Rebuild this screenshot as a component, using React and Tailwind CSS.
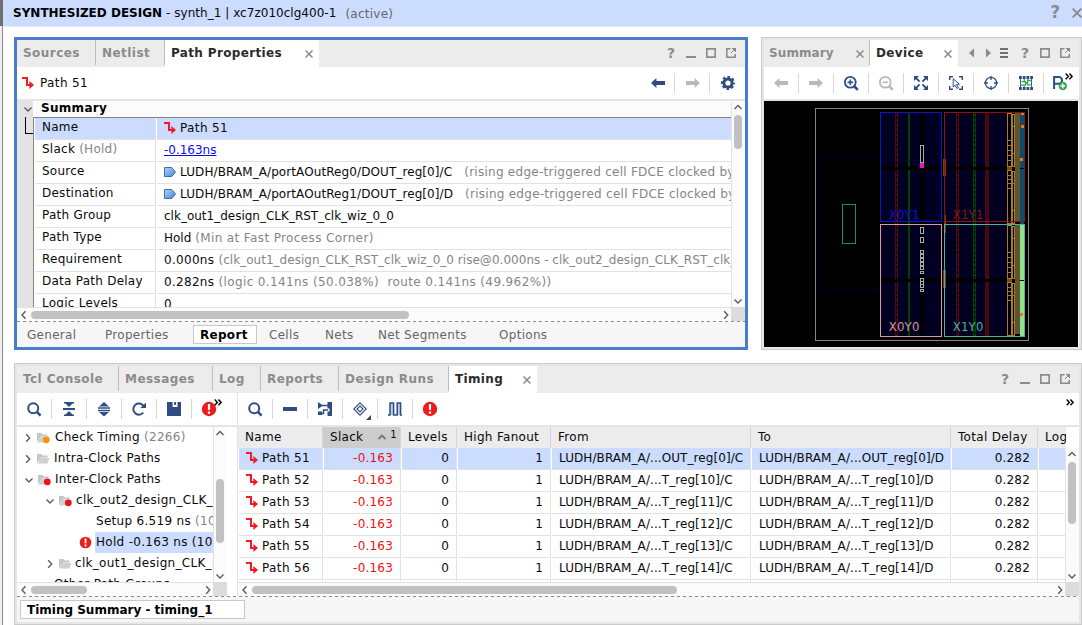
import React from "react";

const NAVY = "#2f4d82";
const DIM = "#b9b9b9";

function Svg({ w = 16, h = 16, children, className = "" }) {
  return (
    <svg width={w} height={h} viewBox={`0 0 ${w} ${h}`} className={"block shrink-0 " + className} fill="none">
      {children}
    </svg>
  );
}

/* ---------- glyphs ---------- */
const PathIcon = () => (
  <Svg w={12} h={12}>
    <path d="M0 1h5v7h3" stroke="#ee1c24" strokeWidth="2" />
    <path d="M7.4 4v8L12 8z" fill="#ee1c24" />
  </Svg>
);
const CellIcon = () => (
  <Svg w={12} h={12}>
    <defs>
      <linearGradient id="pin" x1="0" y1="0" x2="1" y2="1">
        <stop offset="0" stopColor="#b5d6f8" />
        <stop offset="1" stopColor="#3f83d8" />
      </linearGradient>
    </defs>
    <path d="M.5 1.5h7.3l3.7 4.5-3.7 4.5H.5z" fill="url(#pin)" stroke="#3c6fb4" />
  </Svg>
);
const BackArrow = ({ c = NAVY }) => (
  <Svg>
    <path d="M1 8l5.4-5v3H15v4H6.4v3z" fill={c} />
  </Svg>
);
const FwdArrow = ({ c = DIM }) => (
  <Svg>
    <path d="M15 8L9.6 3v3H1v4h8.6v3z" fill={c} />
  </Svg>
);
const Gear = () => (
  <Svg>
    <circle cx="8" cy="8" r="4.1" stroke={NAVY} strokeWidth="3" />
    <circle cx="8" cy="8" r="6.1" stroke={NAVY} strokeWidth="2" strokeDasharray="2.6 2.19" strokeDashoffset="1.3" />
  </Svg>
);
const Search = () => (
  <Svg>
    <circle cx="7.2" cy="7.2" r="5" stroke={NAVY} strokeWidth="2" />
    <path d="M10.8 10.8l3.8 3.8" stroke={NAVY} strokeWidth="2.6" />
  </Svg>
);
const Zoom = ({ c = NAVY, plus }) => (
  <Svg>
    <circle cx="7.3" cy="7.3" r="5.4" stroke={c} strokeWidth="1.8" />
    <path d="M11 11l3.8 3.8" stroke={c} strokeWidth="2.6" />
    <path d="M4.5 7.3h5.6" stroke={c} strokeWidth="1.6" />
    {plus && <path d="M7.3 4.5v5.6" stroke={c} strokeWidth="1.6" />}
  </Svg>
);
const FitIcon = () => (
  <Svg>
    <path d="M1 1h5L1 6zM15 1v5l-5-5zM1 15v-5l5 5zM15 15h-5l5-5z" fill={NAVY} />
    <path d="M3 3l3.6 3.6M13 3L9.4 6.6M3 13l3.6-3.6M13 13L9.4 9.4" stroke={NAVY} strokeWidth="1.8" />
  </Svg>
);
const SelectArea = () => (
  <Svg>
    <path d="M1.7 5V1.7H5M11 1.7h3.3V5M14.3 11v3.3H11M5 14.3H1.7V11" stroke={NAVY} strokeWidth="1.4" />
    <path d="M5.2 3.8l6.2 5.4-2.9.2 1.9 3.3-1.5.8-1.7-3.3-2 1.8z" stroke={NAVY} fill="#fff" />
  </Svg>
);
const Target = () => (
  <Svg>
    <circle cx="8" cy="8" r="5.6" stroke={NAVY} strokeWidth="1.3" />
    <path d="M8 1v4M8 11v4M1 8h4M11 8h4" stroke={NAVY} strokeWidth="1.3" />
  </Svg>
);
const Routing = () => (
  <Svg>
    <path d="M2.5 4v9M13.500 4v9M6.200 4v2M10 4v1M6.200 11v2" stroke={NAVY} strokeWidth=".9" />
    <path d="M1 2.500h14M1 13.500h14" stroke={NAVY} strokeWidth="3" strokeDasharray="2.800 .93" />
    <path d="M3.500 6.600h4v3.600H2.500M12.800 5.500H9.600v4.300h3.200M7.500 8h2" stroke="#2fa84b" strokeWidth="1.3" />
  </Svg>
);
const PinPlus = () => (
  <Svg>
    <path d="M2.1 14V1.9h4.6a3.4 3.4 0 010 6.8H2.1" stroke={NAVY} strokeWidth="2" />
    <circle cx="10.8" cy="11" r="4.2" fill="#35a84d" />
    <path d="M10.8 8.6v4.8M8.4 11h4.8" stroke="#fff" strokeWidth="1.4" />
  </Svg>
);
const Collapse = () => (
  <Svg>
    <path d="M2 7h12v2H2zM3 1h10v1.4H3zM4.4 2.4h7.2L8 6zM3 15h10v-1.4H3zM4.4 13.6h7.2L8 10z" fill={NAVY} />
  </Svg>
);
const Expand = () => (
  <Svg>
    <path d="M8 1l5 4.600H3zM2 6.200h12v1.500H2zM2 8.800h12v1.500H2zM8 15.400l5-4.300H3z" fill={NAVY} />
  </Svg>
);
const Reload = () => (
  <Svg>
    <path d="M12.3 11.5A5.6 5.6 0 1112.6 5" stroke={NAVY} strokeWidth="2" />
    <path d="M15 1.4V7H9.4z" fill={NAVY} />
  </Svg>
);
const Save = () => (
  <Svg>
    <path d="M1 1h3.500v5h7V1H15v14H1z" fill={NAVY} />
    <path d="M8.2 1h1.800v3H8.200zM4 1h2.600v5H4z" fill={NAVY} />
  </Svg>
);
const Alert = ({ s = 16 }) => (
  <svg width={s} height={s} viewBox="0 0 16 16" className="block shrink-0">
    <circle cx="8" cy="8" r="7.2" fill="#ed1c1c" />
    <path d="M6.9 3h2.2v6H6.9zM6.9 10.6h2.2v2.2H6.9z" fill="#fff" />
  </svg>
);
const Minus = () => (
  <Svg>
    <path d="M1 6h14v4H1z" fill={NAVY} />
  </Svg>
);
const Schematic = () => (
  <Svg>
    <path d="M1 1l5 3.500L1 8z" fill={NAVY} />
    <path d="M5 4.500h6M3 12.500h3.500V9H11" stroke={NAVY} strokeWidth="1.5" />
    <path d="M10.500 1H15v14h-4.500v-4.500H12.500V7.500h-2zM1 10.500h4V14H1z" fill={NAVY} />
  </Svg>
);
const Diamond = () => (
  <Svg w={22} h={22}>
    <path d="M11 4.8l6.2 6.2-6.2 6.2L4.8 11z" stroke={NAVY} strokeWidth="1.1" />
    <path d="M11 8l3 3-3 3-3-3z" stroke={NAVY} strokeWidth="1.1" />
    <path d="M22 17v5h-5z" fill="#444" />
  </Svg>
);
const Wave = () => (
  <Svg>
    <path d="M3 2h3v12H3zM10 2h3v12h-3z" fill="#bccdea" />
    <path d="M1 14h2V2h3.6v12h3.6V2h3.4v12H15" stroke={NAVY} strokeWidth="1.5" />
  </Svg>
);
const Folder = ({ dot }) => (
  <Svg w={14} h={13}>
    <path d="M0 11V2h4.500l1.200 1.500H10.500V5.500H4z" fill="#c6c6c6" />
    <path d="M3.500 6H12.500L10.500 11.500H.4z" fill="#d0d0d0" />
    {dot && <circle cx="9.3" cy="8.8" r="3.4" fill={dot} />}
  </Svg>
);

/* ---------- chevrons and window buttons ---------- */
const CHEV = { up: "M1.5 6l3.5-3.5L8.5 6", down: "M1.5 3.5L5 7l3.5-3.5", left: "M6.5 1.2L3 5l3.5 3.8", right: "M3.2 1.2L6.7 5 3.2 8.8" };
const Chevron = ({ dir, c = "#5c5c5c", sw = 1.4 }) => (
  <Svg w={10} h={10}>
    <path d={CHEV[dir]} stroke={c} strokeWidth={sw} />
  </Svg>
);
const Close = ({ s = 8 }) => (
  <svg width={s} height={s} viewBox="0 0 8 8" className="block shrink-0" fill="none">
    <path d="M.5.5l7 7M7.5.5l-7 7" stroke="#8b8b8b" strokeWidth="1.5" />
  </svg>
);
const Question = () => <span className="block w-[10px] text-center text-[14px] leading-[26px] font-bold text-[#8b8b8b]">?</span>;
const WinMin = () => (
  <Svg w={10} h={10}>
    <path d="M0 9h10" stroke="#8b8b8b" strokeWidth="2" />
  </Svg>
);
const WinMax = () => (
  <Svg w={10} h={10}>
    <path d="M.8.8h8.4v8.4H.8z" stroke="#8b8b8b" strokeWidth="1.7" />
  </Svg>
);
const WinPop = () => (
  <Svg w={10} h={10}>
    <path d="M4.500.8H.8v8.4h8.4V6" stroke="#8b8b8b" strokeWidth="1.6" />
    <path d="M10 0v4L6 0zM8.500 1.500L5 5" fill="#8b8b8b" stroke="#8b8b8b" strokeWidth="1" />
  </Svg>
);

/* ---------- shared pieces ---------- */
const Tab = ({ label, w }) => (
  <div className={"flex h-[25px] shrink-0 items-center border-r border-[#bdbdbd] pl-[6px] font-bold tracking-[0.45px] text-[#8b8b8b] " + w}>
    <span className="whitespace-nowrap">{label}</span>
  </div>
);
const ActiveTab = ({ label, w }) => (
  <div className={"flex h-[27px] shrink-0 items-center justify-between bg-white pr-[6px] pb-[2px] pl-[6px] font-bold tracking-[0.35px] text-[#2b2b2b] " + w}>
    <span className="whitespace-nowrap">{label}</span>
    <span className="pt-[2px]"><Close /></span>
  </div>
);
const Tool = ({ children, last, className = "" }) => (
  <div className={"flex h-5 w-[35px] shrink-0 items-center justify-center " + (last ? "pr-px " : "border-r border-[#d6d6d6] ") + className}>{children}</div>
);
const More = () => (
  <Svg w={8} h={7}>
    <path d="M.7.6l2.7 2.8L.7 6.2M4.4.6l2.7 2.8-2.7 2.8" stroke="#000" strokeWidth="1.4" />
  </Svg>
);
const VBar = ({ className, pad, thumb }) => (
  <div className={"flex w-[14px] shrink-0 flex-col items-center border-l border-[#e2e2e2] bg-[#fbfbfb] pr-px " + className}>
    <div className="flex h-[13px] items-center"><Chevron dir="up" /></div>
    <div className={pad} />
    <div className={"w-2 rounded-full bg-[#c1c1c1] " + thumb} />
    <div className="mt-auto flex h-[12px] items-center"><Chevron dir="down" /></div>
  </div>
);
const HBar = ({ className, thumb }) => (
  <div className={"flex h-[14px] items-center border-t border-[#e2e2e2] bg-[#fbfbfb] " + className}>
    <div className="flex w-[14px] shrink-0 justify-center"><Chevron dir="left" /></div>
    <div className={"h-2 shrink-0 rounded-full bg-[#c1c1c1] " + thumb} />
    <div className="ml-auto"><Chevron dir="right" /></div>
  </div>
);
const Dashes = () => (
  <div className="h-px shrink-0 bg-[repeating-linear-gradient(90deg,#8c8c8c_0px,#8c8c8c_3px,#f6f6f6_3px,#f6f6f6_6px)]" />
);

/* ---------- path properties ---------- */
const Gray = ({ children, className = "" }) => <span className={"text-[#858585] " + className}>{children}</span>;
const TRACK = "tracking-[0.38px]";

const PROPS = [
  ["Name", <><PathIcon /><span className="ml-1 tracking-[0.38px]">Path 51</span></>],
  [<>Slack <Gray>(Hold)</Gray></>, <span className="tracking-[-0.02px] text-[#0b0bf0] underline">-0.163ns</span>],
  ["Source", <><CellIcon /><span className="ml-1 tracking-[0.09px]">LUDH/BRAM_A/portAOutReg0/DOUT_reg[0]/C</span><Gray className="ml-[12px] tracking-[0.26px]">(rising edge-triggered cell FDCE clocked by clk_out1)</Gray></>],
  ["Destination", <><CellIcon /><span className="ml-1 tracking-[0.09px]">LUDH/BRAM_A/portAOutReg1/DOUT_reg[0]/D</span><Gray className="ml-[12px] tracking-[0.26px]">(rising edge-triggered cell FDCE clocked by clk_out1)</Gray></>],
  ["Path Group", <span className="tracking-[0px]">clk_out1_design_CLK_RST_clk_wiz_0_0</span>],
  ["Path Type", <>Hold&nbsp;<Gray className={TRACK}>(Min at Fast Process Corner)</Gray></>],
  ["Requirement", <><span className="tracking-[0.3px]">0.000ns&nbsp;</span><Gray className="tracking-[0.03px]">(clk_out1_design_CLK_RST_clk_wiz_0_0 rise@0.000ns - clk_out2_design_CLK_RST_clk_wiz_0_0)</Gray></>],
  ["Data Path Delay", <><span className="tracking-[0.3px]">0.282ns&nbsp;</span><Gray className={TRACK}>(logic 0.141ns (50.038%)&nbsp; route 0.141ns (49.962%))</Gray></>],
  ["Logic Levels", "0"],
];

function PathProperties() {
  return (
    <section className="flex h-[313px] w-[734px] shrink-0 flex-col border-3 border-[#4a7ccb] bg-white">
      <div className="flex h-[27px] shrink-0 bg-[#ececec]">
        <Tab label="Sources" w="w-[79px]" />
        <Tab label="Netlist" w="w-[69px]" />
        <ActiveTab label="Path Properties" w="w-[154px]" />
        <div className="ml-auto flex items-center gap-[10px] pr-[9px] pb-px"><Question /><WinMin /><WinMax /><WinPop /></div>
      </div>
      <div className="flex h-8 shrink-0 items-center pl-[5px]">
        <PathIcon />
        <span className="ml-[6px] tracking-[0.38px]">Path 51</span>
        <div className="ml-auto flex">
          <Tool className="pl-px">
            <BackArrow />
          </Tool>
          <Tool className="pl-px">
            <FwdArrow />
          </Tool>
          <Tool last className="pl-[2px]"><Gear /></Tool>
        </div>
      </div>
      <div className="flex h-[208px] shrink-0 border-t-2 border-[#e5e5e5]">
        <div className="flex w-4 shrink-0 flex-col items-end bg-[#e3e3e3]">
          <div className="flex h-4 items-center pb-px"><Chevron dir="down" /></div>
          <div className="h-[17px] w-2 border-b border-l border-black" />
        </div>
        <div className="flex min-w-0 flex-1 flex-col overflow-hidden">
          <div className="h-4 shrink-0 bg-[#fbfbfb] pl-2 text-[12px] leading-[15px] font-bold tracking-[0.3px] text-black">Summary</div>
          <div className="flex min-h-0 flex-1 flex-col overflow-hidden border-t border-l border-[#858585]">
            {PROPS.map(([k, v], i) => (
              <div key={i} className="flex h-[22px] shrink-0 leading-[18px]">
                <div className={"ml-px w-[121px] shrink-0 border-r border-b border-[#e2e2e2] pl-[7px] tracking-[0.25px] whitespace-nowrap " + (i === 0 ? "bg-[#cbdcfe]" : "")}>{k}</div>
                <div className={"ml-px flex min-w-0 flex-1 items-center overflow-hidden border-b border-[#e2e2e2] pb-[2px] pl-[7px] whitespace-nowrap " + (i === 0 ? "bg-[#cbdcfe]" : "")}>{v}</div>
              </div>
            ))}
          </div>
        </div>
        <VBar className="" pad="h-px" thumb="h-[34px]" />
      </div>
      <div className="flex h-[14px] shrink-0 bg-[#dcdcdc]">
        <HBar className="w-[714px]" thumb="w-[378px]" />
      </div>
      <Dashes />
      <div className="flex min-h-0 flex-1 items-center bg-[#f6f6f6] tracking-[0.3px] text-[#666]">
        <span className="w-[78px] pl-[10px]">General</span>
        <span className="w-[98px] pl-[10px]">Properties</span>
        <span className="flex h-[19px] w-16 items-center border border-[#c8c8c8] bg-white pl-[6px] font-bold text-black">Report</span>
        <span className="w-[56px] pl-3">Cells</span>
        <span className="w-[53px] pl-3">Nets</span>
        <span className="w-[121px] pl-3">Net Segments</span>
        <span className="pl-3">Options</span>
      </div>
    </section>
  );
}

/* ---------- device view ---------- */
const R = ({ x, y, w, h, c }) => <rect x={x} y={y} width={w} height={h} fill={c} />;
const Box = ({ x, y, w, h, c, s = 3 }) => <rect x={x + s / 2} y={y + s / 2} width={w - s} height={h - s} stroke={c} strokeWidth={s} fill="none" />;

function Region({ top }) {
  const y = top;
  return (
    <g>
      {[0, 171].map((o) => (
        <g key={o}>
          <R x={363} y={y + o} w={117} h={159} c="url(#fabric)" />
          <R x={492} y={y + o} w={54} h={159} c="url(#fabric)" />
          <R x={555} y={y + o} w={186} h={159} c="url(#fabric)" />
          <R x={405} y={y + o} w={9} h={162} c="url(#redcol)" />
          <R x={444} y={y + o} w={6} h={162} c="#004000" />
          <g transform="translate(183 0)"><R x={405} y={y + o} w={9} h={162} c="url(#redcol)" /></g>
          <R x={639} y={y + o} w={9} h={162} c="url(#greencol)" />
          <R x={675} y={y + o} w={12} h={162} c="#4a0713" />
          <Box x={741} y={y + o} w={15} h={162} c="#a87a2a" />
          <Box x={756} y={y + o + 3} w={9} h={160} c="#a87a2a" />
          <R x={756} y={y + o + 40} w={9} h={3} c="#a87a2a" />
          <R x={756} y={y + o + 120} w={9} h={3} c="#a87a2a" />
        </g>
      ))}
      {[81, 96, 111, 126, 141, 186, 198, 210, 225].map((d) => (
        <R key={d} x={741} y={y + d} w={15} h={3} c="#a87a2a" />
      ))}
      <R x={765} y={y} w={15} h={327} c="#5f5431" />
      <R x={741} y={y + 162} w={15} h={9} c="#7a4a0a" />
      <R x={765} y={y + 162} w={15} h={6} c="#7a4a0a" />
    </g>
  );
}

function DeviceView() {
  const slots = [450, 462, 474, 486, 498, 534, 543, 552];
  return (
    <svg width="314" height="246" viewBox="12 3 942 738" className="block bg-black" shapeRendering="crispEdges" fill="none">
      <defs>
        <pattern id="fabric" width="18" height="18" patternUnits="userSpaceOnUse">
          <rect width="18" height="18" fill="#00001a" />
          <rect width="18" height="3" fill="#000036" />
          <rect width="3" height="18" fill="#00002e" />
          <rect x="9" y="9" width="3" height="3" fill="#000030" />
        </pattern>
        <pattern id="redcol" width="9" height="15" x="405" patternUnits="userSpaceOnUse">
          <rect width="9" height="15" fill="#4d0814" />
          <rect x="3" y="3" width="3" height="9" fill="#000" />
        </pattern>
        <pattern id="greencol" width="9" height="15" x="639" patternUnits="userSpaceOnUse">
          <rect width="9" height="15" fill="#004000" />
          <rect x="3" y="3" width="3" height="9" fill="#000" />
        </pattern>
      </defs>
      <Box x={165} y={24} w={642} h={699} c="#848484" />
      <path d="M360 175.5H178.500V571.5H360" stroke="#00001e" strokeWidth="3" />
      <Box x={246} y={312} w={42} h={120} c="#2d8a5b" />
      <Region top={39} />
      <Region top={375} />
      <R x={780} y={39} w={12} h={333} c="#0f4a68" />
      <R x={780} y={375} w={12} h={333} c="#90e28c" />
      <R x={780} y={204} w={12} h={3} c="#000" />
      <R x={780} y={540} w={12} h={3} c="#000" />
      {[[783, 36], [783, 75], [780, 174], [780, 639]].map(([x, y]) => (
        <R key={y} x={x} y={y} w={9} h={9} c="#ee7818" />
      ))}
      <R x={549} y={177} w={9} h={51} c="#7d3a0e" />
      <R x={552} y={345} w={6} h={54} c="#7d3a0e" />
      <R x={549} y={510} w={9} h={54} c="#7d3a0e" />
      <Box x={360} y={36} w={186} h={330} c="#1313c8" />
      <Box x={552} y={36} w={243} h={330} c="#8e1010" />
      <Box x={360} y={372} w={186} h={339} c="#d89a9a" />
      <Box x={552} y={372} w={243} h={339} c="#45b5a0" />
      <Box x={480} y={135} w={12} h={54} c="#a9a9a9" />
      <R x={480} y={189} w={12} h={15} c="#f80fc8" />
      <Box x={480} y={381} w={12} h={21} c="#a9a9a9" />
      <Box x={480} y={411} w={12} h={18} c="#a9a9a9" />
      {slots.map((y) => (
        <Box key={y} x={480} y={y} w={12} h={12} c="#a9a9a9" />
      ))}
      <Box x={480} y={513} w={12} h={9} c="#a9a9a9" />
      <Box x={480} y={567} w={12} h={9} c="#a9a9a9" />
      <g fontFamily="'DejaVu Sans', sans-serif" fontSize="35">
        <text x="386" y="357" fill="#1313c8" textLength="92">X0Y1</text>
        <text x="578" y="357" fill="#8e1010" textLength="92">X1Y1</text>
        <text x="386" y="693" fill="#d89a9a" textLength="92">X0Y0</text>
        <text x="578" y="693" fill="#45b5a0" textLength="92">X1Y0</text>
      </g>
    </svg>
  );
}

function DevicePanel() {
  return (
    <section className="flex h-[313px] w-[321px] shrink-0 border border-[#cbcbcb]">
      <div className="flex min-w-0 flex-1 flex-col border-2 border-[#e6e6e6] bg-white">
        <div className="flex h-[27px] shrink-0 bg-[#ececec]">
          <div className="flex h-[25px] w-[106px] shrink-0 items-center justify-between border-r border-[#bdbdbd] pr-[5px] pl-[5px] font-bold tracking-[0.1px] text-[#8b8b8b]">
            Summary<span className="pt-[2px]"><Close /></span>
          </div>
          <ActiveTab label="Device" w="w-[88px]" />
          <div className="ml-auto flex items-center pr-[9px] pb-px">
            <Svg w={5} h={10}><path d="M5 .5v9L0 5z" fill="#8b8b8b" /></Svg>
            <Svg w={5} h={10} className="ml-[12px]"><path d="M0 .5v9L5 5z" fill="#8b8b8b" /></Svg>
            <Svg w={8} h={10} className="mr-[12px] ml-[9px]"><path d="M0 1h8M0 5h8M0 9h8" stroke="#707070" strokeWidth="1.8" /></Svg>
            <div className="flex items-center gap-[10px]"><Question /><WinMax /><WinPop /></div>
          </div>
        </div>
        <div className="flex h-8 shrink-0 items-center">
          <Tool><BackArrow c={DIM} /></Tool>
          <Tool><FwdArrow /></Tool>
          <Tool><Zoom plus /></Tool>
          <Tool><Zoom c={DIM} /></Tool>
          <Tool><FitIcon /></Tool>
          <Tool><SelectArea /></Tool>
          <Tool><Target /></Tool>
          <Tool><Routing /></Tool>
          <div className="flex h-5 w-[35px] items-center pl-[8px]">
            <PinPlus />
            <div className="-ml-[3px] self-start"><More /></div>
          </div>
        </div>
        <div className="border-t-2 border-[#e5e5e5]"><DeviceView /></div>
      </div>
    </section>
  );
}

/* ---------- timing ---------- */
const TREE = [
  { pad: "pl-[6px]", arrow: "right", dot: "#f5940c", gap: "ml-[4px]", text: <>Check Timing <Gray>(2266)</Gray></> },
  { pad: "pl-[6px]", arrow: "right", folder: true, gap: "ml-[3px]", text: "Intra-Clock Paths" },
  { pad: "pl-[7px]", arrow: "down", dot: "#e8151b", gap: "ml-[3px]", text: "Inter-Clock Paths" },
  { pad: "pl-[28px]", arrow: "down", dot: "#e8151b", gap: "ml-[3px]", text: "clk_out2_design_CLK_RST_clk" },
  { pad: "pl-[78px]", gap: "ml-px", text: <>Setup 6.519 ns <Gray>(10)</Gray></> },
  { pad: "pl-[62px]", alert: true, gap: "ml-[3px]", sel: true, text: "Hold -0.163 ns (10)" },
  { pad: "pl-[28px]", arrow: "right", folder: true, gap: "ml-[2px]", text: "clk_out1_design_CLK_RST_clk" },
  { pad: "pl-[36px]", gap: "ml-px", text: "Other Path Groups" },
];

const COLS = ["w-[85px]", "w-[78px]", "w-[56px]", "w-[94px]", "w-[200px]", "w-[200px]", "w-[87px]", "w-[28px]"];
const ROWS = [
  ["51", "OUT_reg[0]"],
  ["52", "T_reg[10]"],
  ["53", "T_reg[11]"],
  ["54", "T_reg[12]"],
  ["55", "T_reg[13]"],
  ["56", "T_reg[14]"],
  ["57", "T_reg[15]"],
];

function Tree() {
  return (
    <div className="flex h-[155px]">
      <div className="flex w-[196px] shrink-0 flex-col overflow-hidden tracking-[0.3px]">
        {TREE.map((n, i) => (
          <div key={i} className={"flex h-[21px] shrink-0 items-center whitespace-nowrap " + n.pad}>
            {n.arrow && <Chevron dir={n.arrow} />}
            {(n.dot || n.folder) && <span className="ml-1"><Folder dot={n.dot} /></span>}
            {n.alert && <Alert s={13} />}
            <span className={n.gap + (n.sel ? " h-[21px] min-w-0 flex-1 overflow-hidden bg-[#cbdcfe] pl-px leading-[20px]" : " leading-[19px]")}>{n.text}</span>
          </div>
        ))}
      </div>
      <VBar className="" pad="h-[39px]" thumb="h-16" />
    </div>
  );
}

function TimingTable() {
  const heads = ["Name", null, "Levels", "High Fanout", "From", "To", "Total Delay", "Log"];
  return (
    <div className="flex min-w-0 flex-1 flex-col border-l border-[#e2e2e2]">
      <div className="flex h-[21px] shrink-0">
        {heads.map((h, i) => (
          <div key={i} className={"flex shrink-0 items-center overflow-hidden pl-[7px] leading-[21px] tracking-[0.3px] whitespace-nowrap " + COLS[i] + (i < 7 ? " border-r border-[#d4d4d4]" : "") + (i === 1 ? " bg-[#cdcdcd]" : " bg-[#ececec]")}>
            {h ?? (
              <>
                Slack
                <span className="mt-[1px] ml-[14px]"><Chevron dir="up" c="#777" sw={1.8} /></span>
                <span className="-mt-[6px] ml-[3px] text-[10px]">1</span>
              </>
            )}
          </div>
        ))}
      </div>
      <div className="flex h-[134px] shrink-0">
        <div className="flex w-[827px] shrink-0 flex-col overflow-hidden">
          {ROWS.map(([n, reg], i) => {
            const cells = [
              <><PathIcon /><span className="ml-1 tracking-[0.38px]">Path {n}</span></>,
              "-0.163", "0", "1",
              `LUDH/BRAM_A/...${reg}/C`,
              `LUDH/BRAM_A/...${reg}/D`,
              "0.282", "",
            ];
            return (
              <div key={n} className="flex h-[22px] shrink-0 leading-[18px]">
                {cells.map((c, j) => (
                  <div key={j} className={"flex shrink-0 border-[#e2e2e2] pl-px " + COLS[j] + (j < 7 ? " border-r" : "")}>
                    <div
                      className={
                        "flex min-w-0 flex-1 items-center border-b border-[#e2e2e2] pb-[2px] whitespace-nowrap " +
                        (i === 0 ? "bg-[#cbdcfe] " : "") +
                        (j === 1 ? "justify-end pr-[7px] tracking-[0.2px] text-[#ee1111]" : j === 2 || j === 3 || j === 6 ? "justify-end pr-[7px] tracking-[0.2px]" : "pl-[7px] tracking-[0.08px]")
                      }
                    >
                      {c}
                    </div>
                  </div>
                ))}
              </div>
            );
          })}
        </div>
        <VBar className="" pad="h-px" thumb="h-[62px]" />
      </div>
      <div className="flex h-[14px] shrink-0 bg-[#dcdcdc]">
        <HBar className="w-[827px]" thumb="w-[425px]" />
      </div>
    </div>
  );
}

function TimingPanel() {
  return (
    <section className="flex h-[262px] w-[1068px] border border-[#cbcbcb]">
      <div className="flex min-w-0 flex-1 flex-col border-2 border-[#e6e6e6] bg-white">
        <div className="flex h-[27px] shrink-0 bg-[#ececec]">
          <Tab label="Tcl Console" w="w-[102px]" />
          <Tab label="Messages" w="w-[94px]" />
          <Tab label="Log" w="w-[48px]" />
          <Tab label="Reports" w="w-[78px]" />
          <Tab label="Design Runs" w="w-[110px]" />
          <ActiveTab label="Timing" w="w-[88px]" />
          <div className="ml-auto flex items-center gap-[10px] pr-[9px] pb-px"><Question /><WinMin /><WinMax /><WinPop /></div>
        </div>
        <div className="flex h-[34px] shrink-0 items-center border-b-2 border-[#e5e5e5]">
          <div className="flex h-full w-[221px] shrink-0 items-center border-r border-[#e2e2e2]">
            <Tool><Search /></Tool>
            <Tool><Collapse /></Tool>
            <Tool><Expand /></Tool>
            <Tool><Reload /></Tool>
            <Tool><Save /></Tool>
            <div className="flex h-5 items-center pl-[9px]">
              <Alert />
              <div className="-ml-[3px] self-start"><More /></div>
            </div>
          </div>
          <Tool><Search /></Tool>
          <Tool><Minus /></Tool>
          <Tool><Schematic /></Tool>
          <Tool><Diamond /></Tool>
          <Tool><Wave /></Tool>
          <Tool last><Alert /></Tool>
          <div className="mr-[5px] mb-[13px] ml-auto"><More /></div>
        </div>
        <div className="flex h-[169px] shrink-0">
          <div className="mr-[10px] flex w-[210px] shrink-0 flex-col">
            <Tree />
            <div className="flex h-[14px] bg-[#dcdcdc]"><HBar className="w-[196px]" thumb="w-14" /></div>
          </div>
          <TimingTable />
        </div>
        <Dashes />
        <div className="flex min-h-0 flex-1 items-center bg-[#f6f6f6] pl-[3px]">
          <div className="flex h-[19px] w-[225px] items-center border border-[#c8c8c8] bg-white pl-[6px] font-bold text-black">Timing Summary - timing_1</div>
        </div>
      </div>
    </section>
  );
}

export default function App() {
  return (
    <div className="flex h-[625px] w-[1082px] overflow-hidden bg-white font-['DejaVu_Sans',sans-serif] text-[12px] text-[#0a0a0a]">
      <div className="flex w-[3px] shrink-0 flex-col">
        <div className="h-[26px] bg-[#6e6e6e]" />
        <div className="flex-1 border-r border-[#8a8a8a] bg-[#f0f0f0]" />
      </div>
      <div className="flex min-w-0 flex-1 flex-col">
        <header className="flex h-[27px] shrink-0 items-center border-b border-[#e4ecfb] bg-[#cbdcfe] pl-[10px] whitespace-nowrap">
          <span className="font-bold text-black">SYNTHESIZED DESIGN</span>
          <span className="ml-1 tracking-[0.03px]">- synth_1 | xc7z010clg400-1</span>
          <span className="ml-[9px] pt-px tracking-[0.25px] text-[#666]">(active)</span>
          <span className="ml-auto text-[17px] font-bold text-[#8b8b8b]">?</span>
          <span className="ml-3"><Close s={10} /></span>
        </header>
        <div className="flex pt-[10px] pl-[11px]">
          <PathProperties />
          <div className="w-[13px] shrink-0" />
          <DevicePanel />
        </div>
        <div className="pt-[13px] pl-[11px]">
          <TimingPanel />
        </div>
      </div>
    </div>
  );
}
